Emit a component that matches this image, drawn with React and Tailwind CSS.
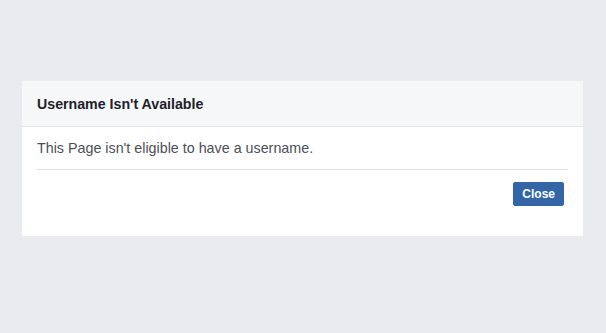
export default function App() {
  return (
    <div className="w-[606px] h-[333px] bg-[#e9ebee] pt-[81px] pl-[22px]" style={{ fontFamily: '"Liberation Sans", Arial, sans-serif' }}>
      <div className="w-[561px] h-[155px] bg-white flex flex-col">
        <div className="h-[46px] bg-[#f6f7f9] border-b border-[#e5e5e5] flex items-center px-[15px] pt-[2px]">
          <span className="text-[14.2px] font-bold text-[#1d2129]">Username Isn't Available</span>
        </div>
        <div className="mx-[15px] h-[43px] border-b border-[#dddfe2] flex items-center pt-[2px]">
          <span className="text-[14.3px] text-[#4b4f56]">This Page isn't eligible to have a username.</span>
        </div>
        <div className="flex justify-end px-[19px] pt-[12px]">
          <button className="h-[24px] px-[8px] bg-[#3366a8] border border-[#3366a8] rounded-[2px] text-white text-[12px] font-bold leading-none">Close</button>
        </div>
      </div>
    </div>
  );
}
